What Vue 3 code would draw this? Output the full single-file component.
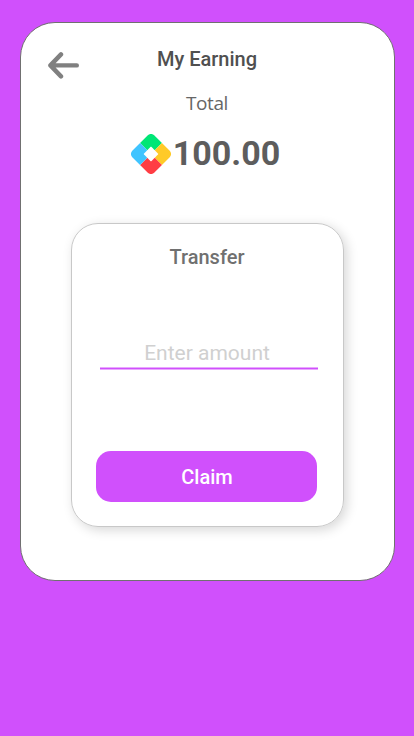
<script setup>
import { ref } from "vue";

const total = ref(100);
const amount = ref('');

function claim() {
  const value = parseFloat(amount.value);

  if (isNaN(value) || value <= 0 || value > total.value) {
    return;
  }

  total.value -= value;
  amount.value = '';
}
</script>

<template>

<div class="page">
  <main class="card">
    <header class="header">
      <button class="back" aria-label="Back">
        <svg width="32" height="28" viewBox="0 0 32 28">
          <path d="M13 3.4 L2.4 14.4 L13 25.4 M3 14.4 H28.8" />
        </svg>
      </button>
      <h1>My Earning</h1>
    </header>

    <div class="label">Total</div>

    <div class="balance">
      <svg class="coin" width="40" height="40" viewBox="0 0 40 40">
        <defs>
          <clipPath id="diamond">
            <rect x="4.5" y="4.5" width="31" height="31" rx="4.5" transform="rotate(45 20 20)" />
          </clipPath>
        </defs>
        <g clip-path="url(#diamond)">
          <g transform="rotate(45 20 20)">
            <rect x="0" y="0" width="20" height="20" fill="#00e676" />
            <rect x="20" y="0" width="20" height="20" fill="#ffca28" />
            <rect x="20" y="20" width="20" height="20" fill="#ff3d44" />
            <rect x="0" y="20" width="20" height="20" fill="#40c4ff" />
          </g>
        </g>
        <rect x="14.7" y="14.7" width="10.6" height="10.6" rx="0.5" fill="#fff" transform="rotate(45 20 20)" />
      </svg>
      <span>{{ total.toFixed(2) }}</span>
    </div>

    <section class="transfer">
      <h2>Transfer</h2>
      <input v-model="amount" type="text" inputmode="decimal" placeholder="Enter amount">
      <button class="claim" @click="claim">Claim</button>
    </section>
  </main>
</div>

</template>

<style>
body {
  margin: 0;
  background-color: #d050fc;
}
</style>

<style scoped>
.page {
  min-height: 736px;
  box-sizing: border-box;
  padding: 22px 19px 0 20px;
  background-color: #d050fc;
  font-family: Roboto, "Liberation Sans", sans-serif;
}

.card {
  box-sizing: border-box;
  width: 375px;
  height: 559px;
  border: 1px solid #707070;
  border-radius: 35px;
  background-color: #fff;
  display: flex;
  flex-direction: column;
  align-items: center;
}

.header {
  width: 100%;
  height: 60px;
  box-sizing: border-box;
  padding: 0 28px 0 27px;
  display: grid;
  grid-template-columns: 32px 1fr 32px;
}

.back {
  padding: 0;
  border: none;
  background: none;
  height: 28px;
  margin-top: 28px;
  cursor: pointer;
}

.back svg {
  display: block;
}

.back path {
  fill: none;
  stroke: #808080;
  stroke-width: 4.4;
  stroke-linecap: round;
  stroke-linejoin: round;
}

h1 {
  margin: 24px 0 0;
  font-size: 20px;
  line-height: 24px;
  font-weight: 500;
  color: #505050;
  text-align: center;
}

.label {
  margin-top: 6px;
  padding-right: 1px;
  font-family: "Open Sans", "Noto Sans", sans-serif;
  font-size: 19px;
  letter-spacing: -0.4px;
  line-height: 28px;
  color: #666;
}

.balance {
  height: 40px;
  margin-top: 17px;
  padding-right: 4px;
  display: flex;
  align-items: center;
  gap: 2px;
  font-size: 34px;
  font-weight: 700;
  line-height: 38px;
  color: #5d5d5d;
}

.balance span {
  padding-bottom: 2px;
}

.transfer {
  box-sizing: border-box;
  width: 273px;
  height: 304px;
  margin-top: 49px;
  padding: 0 26px 0 24px;
  border: 1px solid #c8c8c8;
  border-radius: 27px;
  box-shadow: 3px 3px 12px rgba(0, 0, 0, 0.16);
  display: flex;
  flex-direction: column;
}

h2 {
  margin: 21px 0 0;
  padding-left: 1px;
  font-size: 20px;
  line-height: 24px;
  font-weight: 500;
  color: #707070;
  text-align: center;
}

input {
  box-sizing: border-box;
  height: 32px;
  margin: 69px -1px 0 4px;
  padding: 0 4px 2px 0;
  border: none;
  border-radius: 0;
  outline: none;
  /* 2px line with soft edges */
  background: linear-gradient(#e8a8fe 1px, #d050fc 1px, #d050fc 2px, #e8a8fe 2px) bottom / 100% 3px no-repeat;
  font-family: inherit;
  font-size: 21px;
  text-align: center;
  color: #707070;
}

input::placeholder {
  color: #d0d0d0;
  opacity: 1;
}

.claim {
  height: 51px;
  margin-top: 81px;
  padding: 0 0 0 1px;
  border: none;
  border-radius: 15px;
  background-color: #d050fc;
  color: #fff;
  font-family: inherit;
  font-size: 20px;
  font-weight: 500;
  cursor: pointer;
}

.claim:active {
  background-color: #bd3fe8;
}
</style>
